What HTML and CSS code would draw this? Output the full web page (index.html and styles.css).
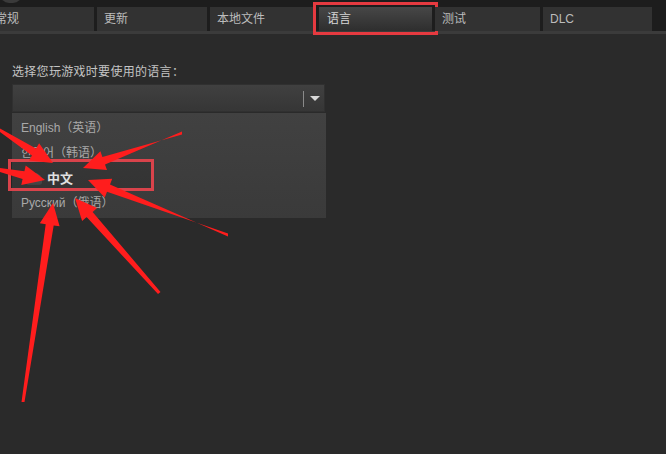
FILE: index.html
```html
<!DOCTYPE html>
<html lang="zh-CN">
<head>
<meta charset="utf-8">
<title>语言</title>
<link rel="stylesheet" href="styles.css">
</head>
<body>
<div class="page">
  <div class="topbar"><span class="topknob"></span></div>
  <nav class="tabs">
    <div class="tab t1">常规</div>
    <div class="tab t2">更新</div>
    <div class="tab t3">本地文件</div>
    <div class="tab t4 active">语言<span class="mark mark-tab"></span></div>
    <div class="tab t5">测试</div>
    <div class="tab t6">DLC</div>
  </nav>
  <main class="content">
    <div class="label">选择您玩游戏时要使用的语言：</div>
    <div class="select">
      <span class="sep"></span>
      <span class="caret"></span>
    </div>
    <ul class="options">
      <li class="opt">English（英语）</li>
      <li class="opt">한국어（韩语）</li>
      <li class="opt selected"><span class="sel-icon"></span><span class="sel-text">中文</span><span class="mark mark-opt"></span></li>
      <li class="opt">Русский（俄语）</li>
    </ul>
  </main>
  <svg class="arrows" width="666" height="454" viewBox="0 0 666 454">
    <polygon points="0,128.5 0,132 32,155.4 29,160.5 53,163 39.1,143.3 36,148.5"/>
    <polygon points="182,131.5 182,134.5 102.4,156.9 100.4,151.3 83,168 107,170.1 105,164.5"/>
    <polygon points="0,168 0,172 22.6,179.1 21.3,185 45,180 25.7,165.4 24.4,171.3"/>
    <polygon points="228,233.5 228,236.5 110,184.4 112.2,178.8 88,180 104.8,197.4 107,191.8"/>
    <polygon points="158,294 160.5,292 92.6,211.9 97.1,207.9 75,198 82.1,221.1 86.6,217.1"/>
    <polygon points="21.5,402 24.5,402 53.7,225.4 59.6,226.3 53,203 39.8,223.3 45.7,224.2"/>
  </svg>
</div>
</body>
</html>
```
FILE: styles.css
```css
* { box-sizing: border-box; }
html, body { margin: 0; padding: 0; }
body {
  background: #2a2a2a;
  font-family: "Liberation Sans", "Noto Sans CJK SC", sans-serif;
  overflow: hidden;
}
.page {
  position: relative;
  width: 666px;
  height: 454px;
  background: #2a2a2a;
}
.topbar {
  height: 7px;
  background: #1d1d1d;
  position: relative;
}
.topknob {
  position: absolute;
  left: 0;
  top: -6px;
  width: 22px;
  height: 9px;
  border-radius: 0 0 11px 11px;
  background: #3a3a3a;
}
.tabs {
  display: flex;
  gap: 3px;
  height: 27px;
  background: #1d1d1d;
  border-bottom: 3px solid #3b3b3b;
  margin-left: -12px;
}
.tab {
  position: relative;
  height: 24px;
  background: #323232;
  color: #bcbcbc;
  font-size: 12px;
  line-height: 24px;
  padding-left: 7px;
  white-space: nowrap;
}
.t1 { width: 106px; }
.t2 { width: 110px; }
.t3 { width: 106px; }
.t4 { width: 113px; }
.t5 { width: 105px; }
.t6 { width: 109px; }
.tab.active {
  background: linear-gradient(#474747, #2e2e2e);
  color: #d6d6d6;
  padding-left: 8px;
}
.mark {
  position: absolute;
  border: 3px solid #e53a40;
  pointer-events: none;
}
.mark-tab {
  left: -6px;
  top: -5px;
  width: 125px;
  height: 33px;
}
.content {
  padding: 30px 0 0 12px;
}
.label {
  color: #c4c4c4;
  font-size: 12px;
  letter-spacing: 0.3px;
  line-height: 16px;
}
.select {
  position: relative;
  margin-top: 4px;
  width: 313px;
  height: 28px;
  background: linear-gradient(#404040, #363636);
  border: 1px solid #303030;
}
.sep {
  position: absolute;
  left: 290px;
  top: 6px;
  width: 1px;
  height: 16px;
  background: #8a8a8a;
}
.caret {
  position: absolute;
  left: 297px;
  top: 11px;
  width: 0;
  height: 0;
  border-left: 5px solid transparent;
  border-right: 5px solid transparent;
  border-top: 5px solid #d8d8d8;
}
.options {
  list-style: none;
  margin: 1px 0 0;
  padding: 3px 0 2px;
  width: 314px;
  background: linear-gradient(#414141, #3a3a3a);
}
.opt {
  position: relative;
  height: 25px;
  line-height: 25px;
  padding-left: 9px;
  font-size: 12px;
  color: #a9a9a9;
  display: flex;
  align-items: center;
}
.opt.selected {
  padding-left: 14px;
}
.sel-icon {
  width: 16px;
  height: 12px;
  border-radius: 8px 8px 3px 3px;
  background: linear-gradient(#6a6a6a, #4a4a4a);
  margin-right: 5px;
}
.sel-text {
  color: #ffffff;
  font-size: 13px;
  font-weight: bold;
}
.mark-opt {
  left: -4px;
  top: -7px;
  width: 146px;
  height: 32px;
  background: rgba(0, 0, 0, 0.12);
  border-color: #d9434b;
}
.arrows {
  position: absolute;
  left: 0;
  top: 0;
  pointer-events: none;
}
.arrows polygon {
  fill: #ff1d1d;
}
```
